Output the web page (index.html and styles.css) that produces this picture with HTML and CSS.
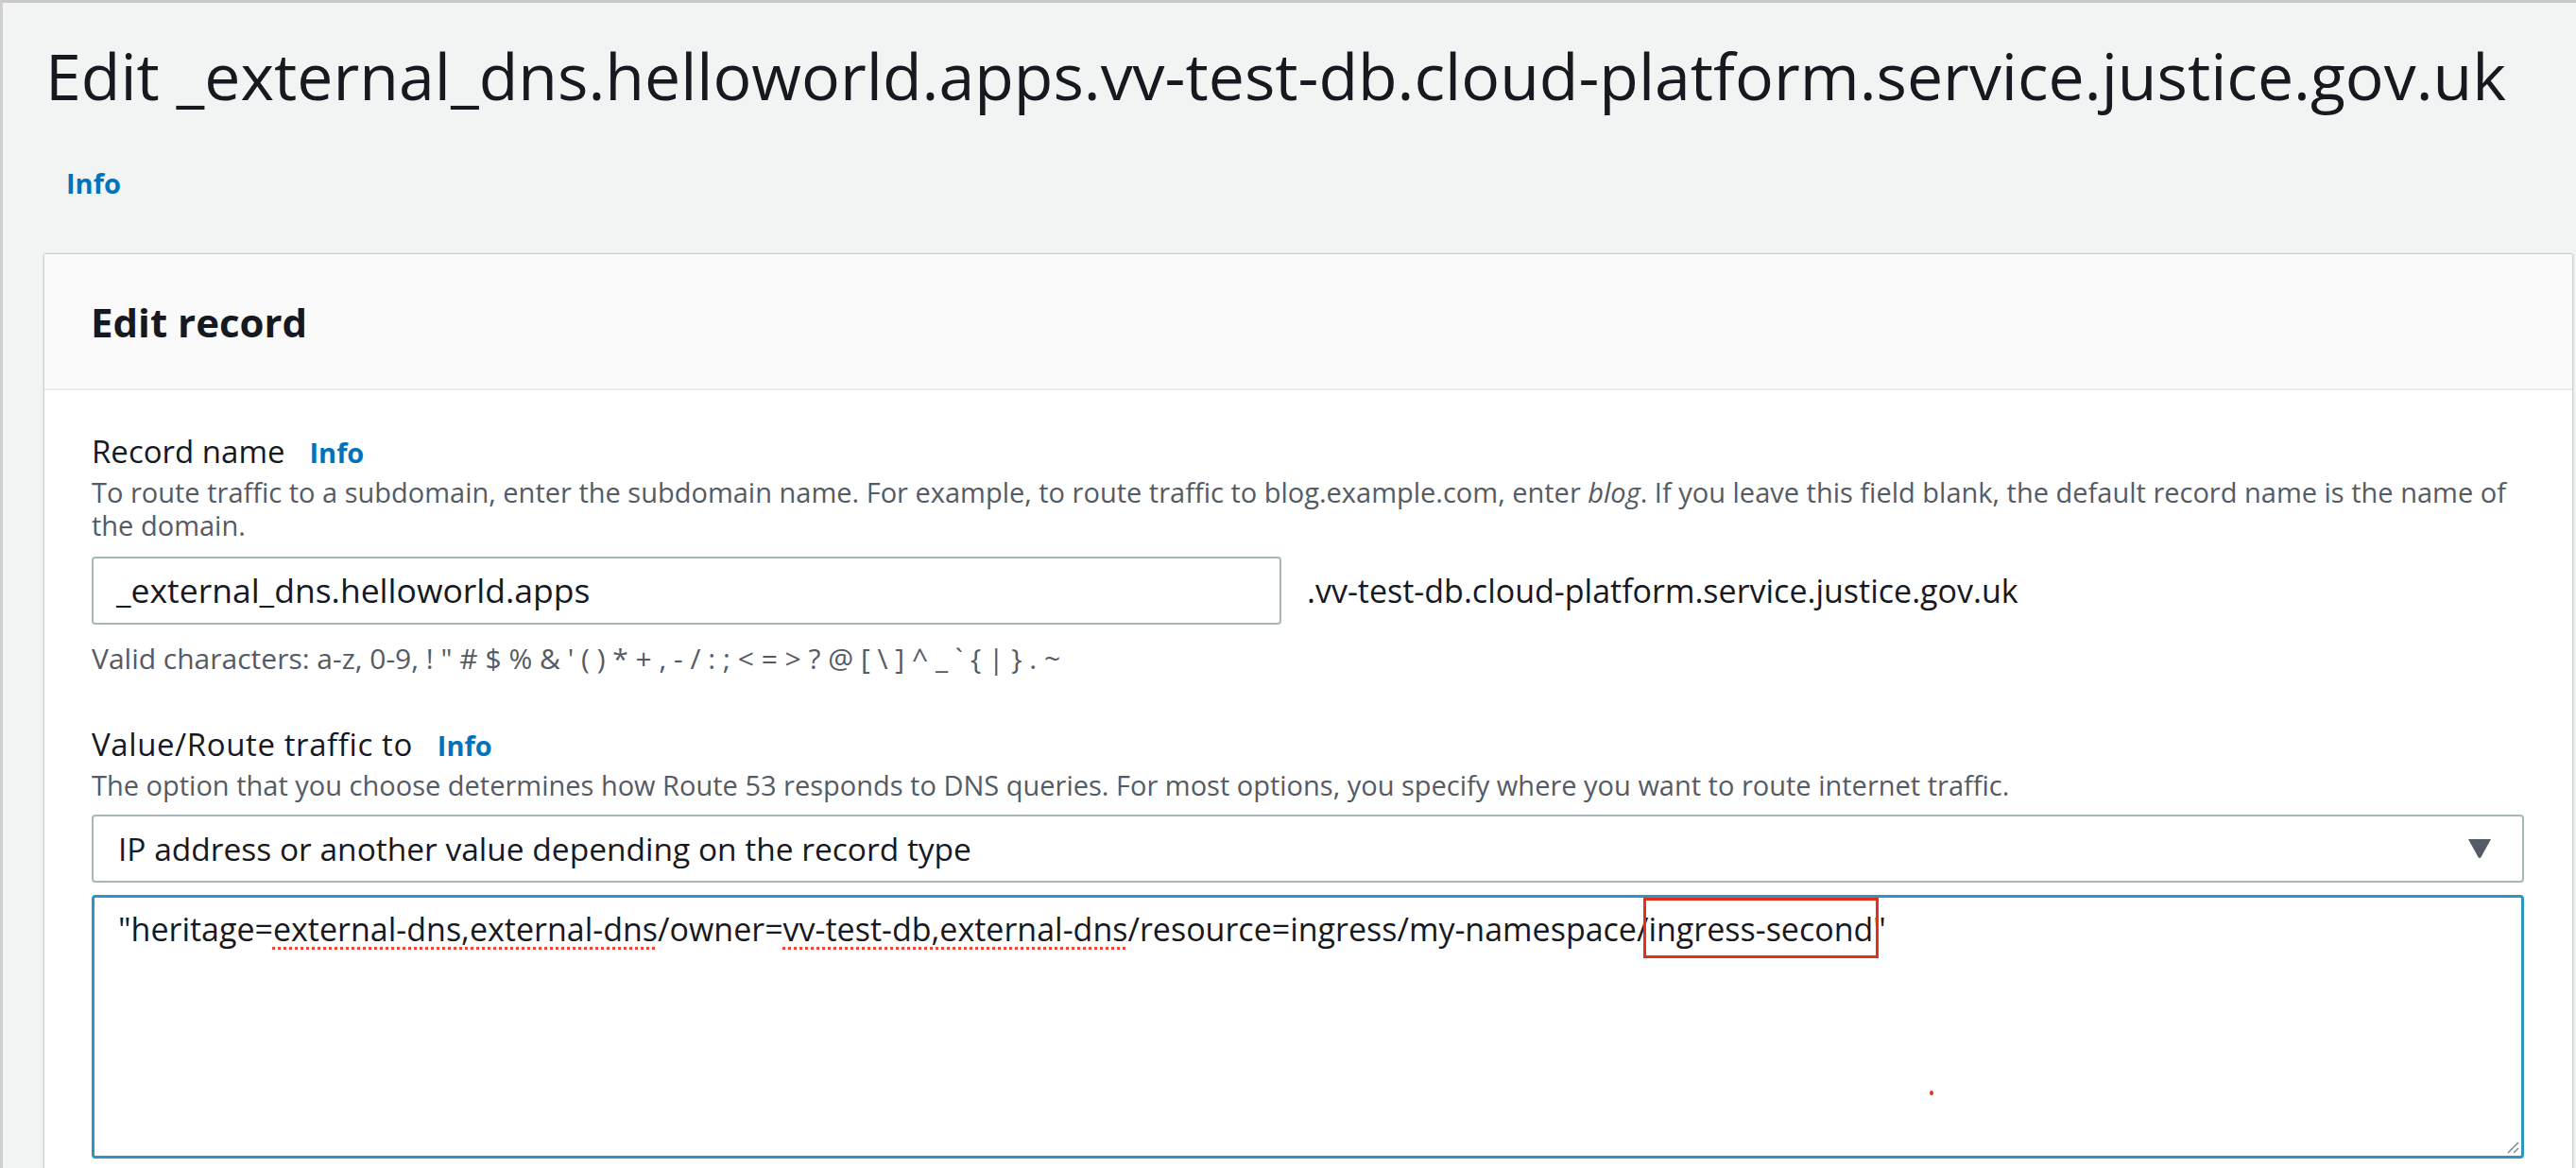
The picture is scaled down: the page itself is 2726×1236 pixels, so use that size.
FILE: index.html
```html
<!DOCTYPE html>
<html lang="en">
<head>
<meta charset="utf-8">
<title>Edit record</title>
<link rel="stylesheet" href="styles.css">
</head>
<body>
<div class="frame">
  <header class="page-head">
    <h1 class="page-title">Edit _external_dns.helloworld.apps.vv-test-db.cloud-platform.service.justice.gov.uk</h1>
    <a class="info info-top" href="#">Info</a>
  </header>

  <section class="card">
    <div class="card-head">
      <h2 class="card-title">Edit record</h2>
    </div>
    <div class="card-body">
      <div class="field">
        <div class="label-row">
          <span class="label">Record name</span>
          <a class="info" href="#">Info</a>
        </div>
        <p class="desc">To route traffic to a subdomain, enter the subdomain name. For example, to route traffic to blog.example.com, enter <em>blog</em>. If you leave this field blank, the default record name is the name of the domain.</p>
        <div class="name-row">
          <div class="input">_external_dns.helloworld.apps</div>
          <span class="suffix">.vv-test-db.cloud-platform.service.justice.gov.uk</span>
        </div>
        <p class="hint">Valid characters: a-z, 0-9, ! " # $ % &amp; ' ( ) * + , - / : ; &lt; = &gt; ? @ [ \ ] ^ _ ` { | } . ~</p>
      </div>

      <div class="field field-value">
        <div class="label-row">
          <span class="label label-wide">Value/Route traffic to</span>
          <a class="info" href="#">Info</a>
        </div>
        <p class="desc">The option that you choose determines how Route 53 responds to DNS queries. For most options, you specify where you want to route internet traffic.</p>
        <div class="select">
          <span class="select-text">IP address or another value depending on the record type</span>
          <svg class="caret" width="24" height="20" viewBox="0 0 24 20"><path d="M0 0 H24 L13.5 19 Q12 21 10.5 19 Z" fill="#545b64"/></svg>
        </div>
        <div class="textarea">
          <span class="ta-text">"heritage=<span class="sp">external-dns,external-dns</span>/owner=<span class="sp">vv-test-db,external-dns</span>/resource=ingress/my-namespace/<span class="mark">ingress-second</span>"</span>
          <span class="dot"></span>
          <svg class="grip" width="16" height="16" viewBox="0 0 16 16"><path d="M15 4 L4 15 M15 10 L10 15" stroke="#7d8998" stroke-width="1.5"/></svg>
        </div>
      </div>
    </div>
  </section>
</div>
</body>
</html>
```

FILE: styles.css
```css
html, body {
  margin: 0;
  padding: 0;
}
body {
  background: #f2f3f3;
  font-family: "Open Sans", "Noto Sans", sans-serif;
  color: #16191f;
  overflow: hidden;
}
.frame {
  border-top: 3px solid #c9c9c9;
  border-left: 3px solid #d0d0d0;
  min-height: 1233px;
  box-sizing: border-box;
}
.page-head {
  padding: 37px 0 0 45px;
  height: 229px;
  box-sizing: border-box;
}
.page-title {
  margin: 0;
  font-size: 68px;
  line-height: 80px;
  font-weight: 400;
  color: #16191f;
  white-space: nowrap;
}
.info {
  color: #0073bb;
  font-weight: 700;
  text-decoration: none;
  font-size: 29px;
}
.info-top {
  display: inline-block;
  margin: 56px 0 0 22px;
  line-height: 36px;
}
.card {
  margin: 37px 4px 0 44px;
  background: #ffffff;
  box-shadow: -1px 0 2px rgba(0,0,0,0.18), 1px 0 2px rgba(0,0,0,0.18), 0 -1px 1px rgba(0,0,0,0.06);
}
.card-head {
  background: #fafafa;
  border-bottom: 2px solid #eaeded;
  height: 144px;
  box-sizing: border-box;
  padding: 44px 0 0 49px;
}
.card-title {
  margin: 0;
  font-size: 42px;
  line-height: 56px;
  font-weight: 700;
  color: #16191f;
}
.card-body {
  padding: 43px 51px 40px 50px;
}
.label-row {
  display: flex;
  align-items: baseline;
  gap: 26px;
  line-height: 44px;
}
.label {
  font-size: 33px;
  color: #16191f;
}
.label-wide {
  letter-spacing: 0.6px;
}
.desc, .hint {
  margin: 0;
  font-size: 29px;
  line-height: 35px;
  color: #545b64;
}
.desc {
  margin-top: 2px;
}
.desc em {
  font-style: italic;
}
.name-row {
  display: flex;
  align-items: center;
  gap: 27px;
  margin-top: 16px;
}
.input {
  width: 1259px;
  height: 72px;
  box-sizing: border-box;
  border: 2px solid #aab7b8;
  border-radius: 4px;
  padding: 0 24px;
  font-size: 35.5px;
  line-height: 66px;
  color: #16191f;
}
.suffix {
  font-size: 34px;
  color: #16191f;
}
.hint {
  margin-top: 18px;
  font-size: 30px;
}
.field-value {
  margin-top: 52px;
}
.select {
  margin-top: 14px;
  height: 72px;
  box-sizing: border-box;
  border: 2px solid #aab7b8;
  border-radius: 4px;
  display: flex;
  align-items: center;
  justify-content: space-between;
  padding: 0 33px 0 26px;
  font-size: 33.5px;
  color: #16191f;
}
.caret {
  display: block;
}
.textarea {
  position: relative;
  margin-top: 13px;
  height: 279px;
  box-sizing: border-box;
  border: 3px solid #2e95c3;
  border-radius: 4px;
  padding: 10px 25px;
  font-size: 34px;
  line-height: 46px;
  color: #16191f;
}
.sp {
  text-decoration: underline dotted #e8473b;
  text-decoration-thickness: 3px;
  text-underline-offset: 6px;
}
.mark {
  position: relative;
}
.mark::after {
  content: "";
  position: absolute;
  left: -5px;
  right: -6px;
  top: -10px;
  bottom: -8px;
  border: 3px solid #e3311d;
}
.dot {
  position: absolute;
  left: 1942px;
  top: 204px;
  width: 4px;
  height: 5px;
  background: #e3311d;
  border-radius: 50%;
}
.grip {
  position: absolute;
  right: 2px;
  bottom: 2px;
}
```
